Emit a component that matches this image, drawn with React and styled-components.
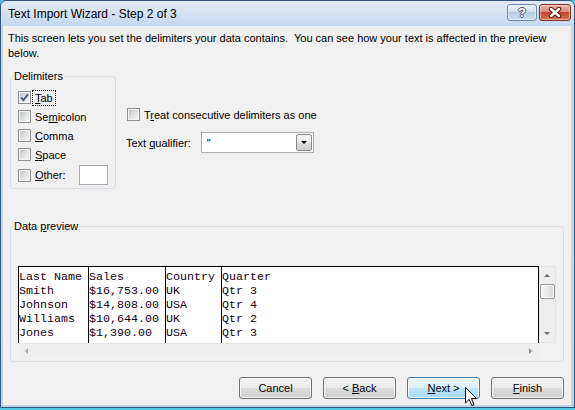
import styled, { createGlobalStyle } from 'styled-components'

const GlobalStyle = createGlobalStyle`
  * { box-sizing: border-box; }
  html, body { margin: 0; padding: 0; }
  body {
    background: #52c9e2;
    font-family: "Liberation Sans", Arial, sans-serif;
  }
`

const Window = styled.div`
  position: relative;
  width: 575px;
  height: 408px;
  display: flex;
  flex-direction: column;
  border: 1px solid #34547c;
  border-radius: 6px 6px 0 0;
  padding: 0 3px 2px 2px;
  background: linear-gradient(to bottom, #e2ecf7 0, #c6d9ee 24px, #bfd4eb 100%);
`

const TitleBar = styled.div`
  height: 25px;
  display: flex;
  align-items: flex-start;
`

const Title = styled.div`
  padding: 6px 0 0 5px;
  font-size: 12px;
  line-height: 14px;
  color: #000;
`

const CaptionButtons = styled.div`
  margin-left: auto;
  margin-top: 3px;
  display: flex;
  gap: 2px;
`

const CaptionButton = styled.div`
  width: ${p => p.w}px;
  height: 17px;
  border: 1px solid ${p => (p.danger ? '#7d2c22' : '#6a88ae')};
  border-radius: 3px;
  display: flex;
  align-items: center;
  justify-content: center;
  box-shadow: inset 0 0 0 1px rgba(255, 255, 255, 0.45);
  background: ${p =>
    p.danger
      ? 'linear-gradient(to bottom, #eab2a4 0%, #dc8b77 45%, #c44b31 50%, #d4704f 100%)'
      : 'linear-gradient(to bottom, #eaf1f9 0%, #d3e1f0 45%, #b6cbe3 50%, #c9dcf1 100%)'};
`

const HelpGlyph = styled.span`
  font-size: 13px;
  font-weight: bold;
  line-height: 13px;
  color: #fff;
  text-shadow: 1px 0 #3f5370, -1px 0 #3f5370, 0 1px #3f5370, 0 -1px #3f5370;
`

const Client = styled.div`
  flex: 1;
  display: flex;
  flex-direction: column;
  background: #f0f0f0;
  font-size: 11px;
  color: #000;
`

const Description = styled.p`
  margin: 5px 12px 0 5px;
  line-height: 15px;
`

const MidRow = styled.div`
  display: flex;
  align-items: flex-start;
  margin: 8px 0 0 7px;
`

const Group = styled.fieldset`
  margin: ${p => p.m || '0'};
  padding: 0;
  min-width: 0;
  width: ${p => (p.w ? `${p.w}px` : 'auto')};
  border: 1px solid #d5dfe5;
  border-radius: 3px;
`

const Legend = styled.legend`
  margin-left: 2px;
  padding: 0 1px;
  line-height: 14px;
  font-size: 11px;
`

const DelimList = styled.div`
  padding: 5px 7px 2px 7px;
`

const CheckRow = styled.div`
  display: flex;
  align-items: center;
  gap: 4px;
  height: ${p => p.h || 19}px;
  margin-left: ${p => p.ml || 0}px;
`

const Box = styled.span`
  flex: none;
  width: 13px;
  height: 13px;
  border: 1px solid #8e8f8f;
  background: linear-gradient(135deg, #b9bdc2 0%, #e6e7e8 60%, #f6f6f6 100%);
  box-shadow: inset 0 0 0 1px #f4f4f4;
  display: flex;
  align-items: center;
  justify-content: center;
`

const Focus = styled.span`
  margin-left: -3px;
  padding: 0 2px;
  border: 1px dotted #000;
  line-height: 14px;
`

const TextBox = styled.div`
  margin-left: auto;
  width: ${p => p.w}px;
  height: ${p => p.h}px;
  background: #fff;
  border: 1px solid #abadb3;
  border-top-color: #a0a3aa;
`

const Options = styled.div`
  display: flex;
  flex-direction: column;
  margin-left: 10px;
  padding-top: 36px;
`

const QualRow = styled.div`
  display: flex;
  align-items: center;
  gap: 10px;
  height: 21px;
  margin-top: 8px;
`

const Combo = styled.div`
  width: 113px;
  height: 21px;
  display: flex;
  align-items: center;
  background: #fff;
  border: 1px solid #abadb3;
  padding: 1px;
`

const ComboValue = styled.span`
  flex: 1;
  padding-left: 4px;
  line-height: 14px;
`

const DropButton = styled.div`
  width: 16px;
  height: 17px;
  border: 1px solid #8b8b8b;
  border-radius: 2px;
  background: linear-gradient(to bottom, #f2f2f2 0%, #ebebeb 50%, #dddddd 51%, #cfcfcf 100%);
  display: flex;
  align-items: center;
  justify-content: center;
`

const Arrow = styled.span`
  width: 0;
  height: 0;
  border-style: solid;
  border-color: transparent;
  ${p => p.dir === 'down' && `border-width: ${p.s || 4}px ${p.s || 4}px 0; border-top-color: ${p.c || '#5b5b5b'};`}
  ${p => p.dir === 'up' && `border-width: 0 ${p.s || 4}px ${p.s || 4}px; border-bottom-color: ${p.c || '#5b5b5b'};`}
  ${p => p.dir === 'left' && `border-width: ${p.s || 4}px ${p.s || 4}px ${p.s || 4}px 0; border-right-color: ${p.c || '#5b5b5b'};`}
  ${p => p.dir === 'right' && `border-width: ${p.s || 4}px 0 ${p.s || 4}px ${p.s || 4}px; border-left-color: ${p.c || '#5b5b5b'};`}
`

const PreviewArea = styled.div`
  padding: 33px 7px 3px 7px;
`

const Preview = styled.div`
  display: grid;
  grid-template-columns: 1fr 17px;
  grid-template-rows: 77px 15px;
`

const Table = styled.div`
  display: flex;
  overflow: hidden;
  background: #fff;
  border: 1px solid #000;
  border-bottom: none;
`

const Column = styled.div`
  flex: ${p => (p.w ? `0 0 ${p.w}px` : '1')};
  border-right: ${p => (p.w ? '1px solid #000' : 'none')};
  padding-top: 3px;
  font-family: "Liberation Mono", "Courier New", monospace;
  font-size: 11.67px;
  line-height: 14px;
  color: #140010;
  white-space: pre;
`

const VScroll = styled.div`
  display: flex;
  flex-direction: column;
  align-items: center;
  background: #eeeeee;
  border: 1px solid #e3e3e3;
  border-left: none;
`

const ScrollEnd = styled.div`
  flex: none;
  width: ${p => p.w || 15}px;
  height: ${p => p.h || 17}px;
  display: flex;
  align-items: center;
  justify-content: center;
`

const Thumb = styled.div`
  width: 15px;
  height: 15px;
  border: 1px solid #979797;
  border-radius: 2px;
  background: linear-gradient(to right, #f5f5f5 0%, #e9e9e9 50%, #d6d6d6 100%);
  box-shadow: inset 0 0 0 1px rgba(255, 255, 255, 0.7);
`

const Spacer = styled.div`
  flex: 1;
`

const HScroll = styled.div`
  display: flex;
  align-items: center;
  background: #eeeeee;
  border-top: 1px solid #e3e3e3;
`

const Corner = styled.div`
  background: #f0f0f0;
`

const ButtonRow = styled.div`
  display: flex;
  justify-content: flex-end;
  gap: 11px;
  margin-top: 15px;
  padding-right: 7px;
`

const Button = styled.div`
  width: 73px;
  height: 22px;
  display: flex;
  align-items: center;
  justify-content: center;
  border: 1px solid ${p => (p.hot ? '#3c7fb1' : '#707070')};
  border-radius: 3px;
  box-shadow: inset 0 0 0 1px rgba(255, 255, 255, 0.75);
  background: ${p =>
    p.hot
      ? 'linear-gradient(to bottom, #eaf6fd 0%, #d9f0fc 50%, #bee6fd 51%, #a7d9f5 100%)'
      : 'linear-gradient(to bottom, #f2f2f2 0%, #ebebeb 50%, #dddddd 51%, #cfcfcf 100%)'};
  font-size: 11px;
  white-space: pre;
`

const Cursor = styled.svg`
  position: absolute;
  left: 464px;
  top: 386px;
`

const columns = [
  { w: 70, rows: ['Last Name', 'Smith', 'Johnson', 'Williams', 'Jones'] },
  { w: 77, rows: ['Sales', '$16,753.00', '$14,808.00', '$10,644.00', '$1,390.00'] },
  { w: 56, rows: ['Country', 'UK', 'USA', 'UK', 'USA'] },
  { rows: ['Quarter', 'Qtr 3', 'Qtr 4', 'Qtr 2', 'Qtr 3'] },
]

function Check({ checked }) {
  return (
    <Box>
      {checked && (
        <svg width="9" height="9" viewBox="0 0 9 9">
          <path d="M1.2 4.6 L3.4 7.2 L8 1.4" fill="none" stroke="#3b4d80" strokeWidth="1.7" />
        </svg>
      )}
    </Box>
  )
}

export default function App() {
  return (
    <>
      <GlobalStyle />
      <Window>
        <TitleBar>
          <Title>Text Import Wizard - Step 2 of 3</Title>
          <CaptionButtons>
            <CaptionButton w={30}>
              <HelpGlyph>?</HelpGlyph>
            </CaptionButton>
            <CaptionButton w={32} danger>
              <svg width="14" height="11" viewBox="0 0 14 11">
                <path d="M3 2 L11 9 M11 2 L3 9" stroke="#5b1d14" strokeWidth="4.4" strokeLinecap="round" />
                <path d="M3 2 L11 9 M11 2 L3 9" stroke="#fff" strokeWidth="2.4" strokeLinecap="round" />
              </svg>
            </CaptionButton>
          </CaptionButtons>
        </TitleBar>

        <Client>
          <Description>
            This screen lets you set the delimiters your data contains.&nbsp; You can see how your text is affected in the preview below.
          </Description>

          <MidRow>
            <Group w={106}>
              <Legend>Delimiters</Legend>
              <DelimList>
                <CheckRow>
                  <Check checked />
                  <Focus><u>T</u>ab</Focus>
                </CheckRow>
                <CheckRow>
                  <Check />
                  <span>Se<u>m</u>icolon</span>
                </CheckRow>
                <CheckRow>
                  <Check />
                  <span><u>C</u>omma</span>
                </CheckRow>
                <CheckRow>
                  <Check />
                  <span><u>S</u>pace</span>
                </CheckRow>
                <CheckRow h={22}>
                  <Check />
                  <span><u>O</u>ther:</span>
                  <TextBox w={29} h={20} />
                </CheckRow>
              </DelimList>
            </Group>

            <Options>
              <CheckRow ml={1}>
                <Check />
                <span>T<u>r</u>eat consecutive delimiters as one</span>
              </CheckRow>
              <QualRow>
                <span>Text <u>q</u>ualifier:</span>
                <Combo>
                  <ComboValue>"</ComboValue>
                  <DropButton>
                    <Arrow dir="down" s={3.5} c="#000" />
                  </DropButton>
                </Combo>
              </QualRow>
            </Options>
          </MidRow>

          <Group m="30px 7px 0 7px">
            <Legend>Data <u>p</u>review</Legend>
            <PreviewArea>
              <Preview>
                <Table>
                  {columns.map((col, i) => (
                    <Column key={i} w={col.w}>
                      {col.rows.join('\n')}
                    </Column>
                  ))}
                </Table>
                <VScroll>
                  <ScrollEnd>
                    <Arrow dir="up" s={3.5} c="#6a6a6a" />
                  </ScrollEnd>
                  <Thumb />
                  <Spacer />
                  <ScrollEnd>
                    <Arrow dir="down" s={3.5} c="#6a6a6a" />
                  </ScrollEnd>
                </VScroll>
                <HScroll>
                  <ScrollEnd w={17} h={14}>
                    <Arrow dir="left" s={3.5} c="#a8a8a8" />
                  </ScrollEnd>
                  <Spacer />
                  <ScrollEnd w={17} h={14}>
                    <Arrow dir="right" s={3.5} c="#8a8a8a" />
                  </ScrollEnd>
                </HScroll>
                <Corner />
              </Preview>
            </PreviewArea>
          </Group>

          <ButtonRow>
            <Button><span>Cancel</span></Button>
            <Button><span>&lt; <u>B</u>ack</span></Button>
            <Button hot><span><u>N</u>ext &gt;</span></Button>
            <Button><span><u>F</u>inish</span></Button>
          </ButtonRow>
        </Client>

        <Cursor width="13" height="20" viewBox="0 0 13 20">
          <path d="M0.5 0.5 V16 L4.2 12.4 L6.8 18.6 L9 17.7 L6.5 11.6 H11.5 Z" fill="#fff" stroke="#000" strokeWidth="1" strokeLinejoin="round" />
        </Cursor>
      </Window>
    </>
  )
}
